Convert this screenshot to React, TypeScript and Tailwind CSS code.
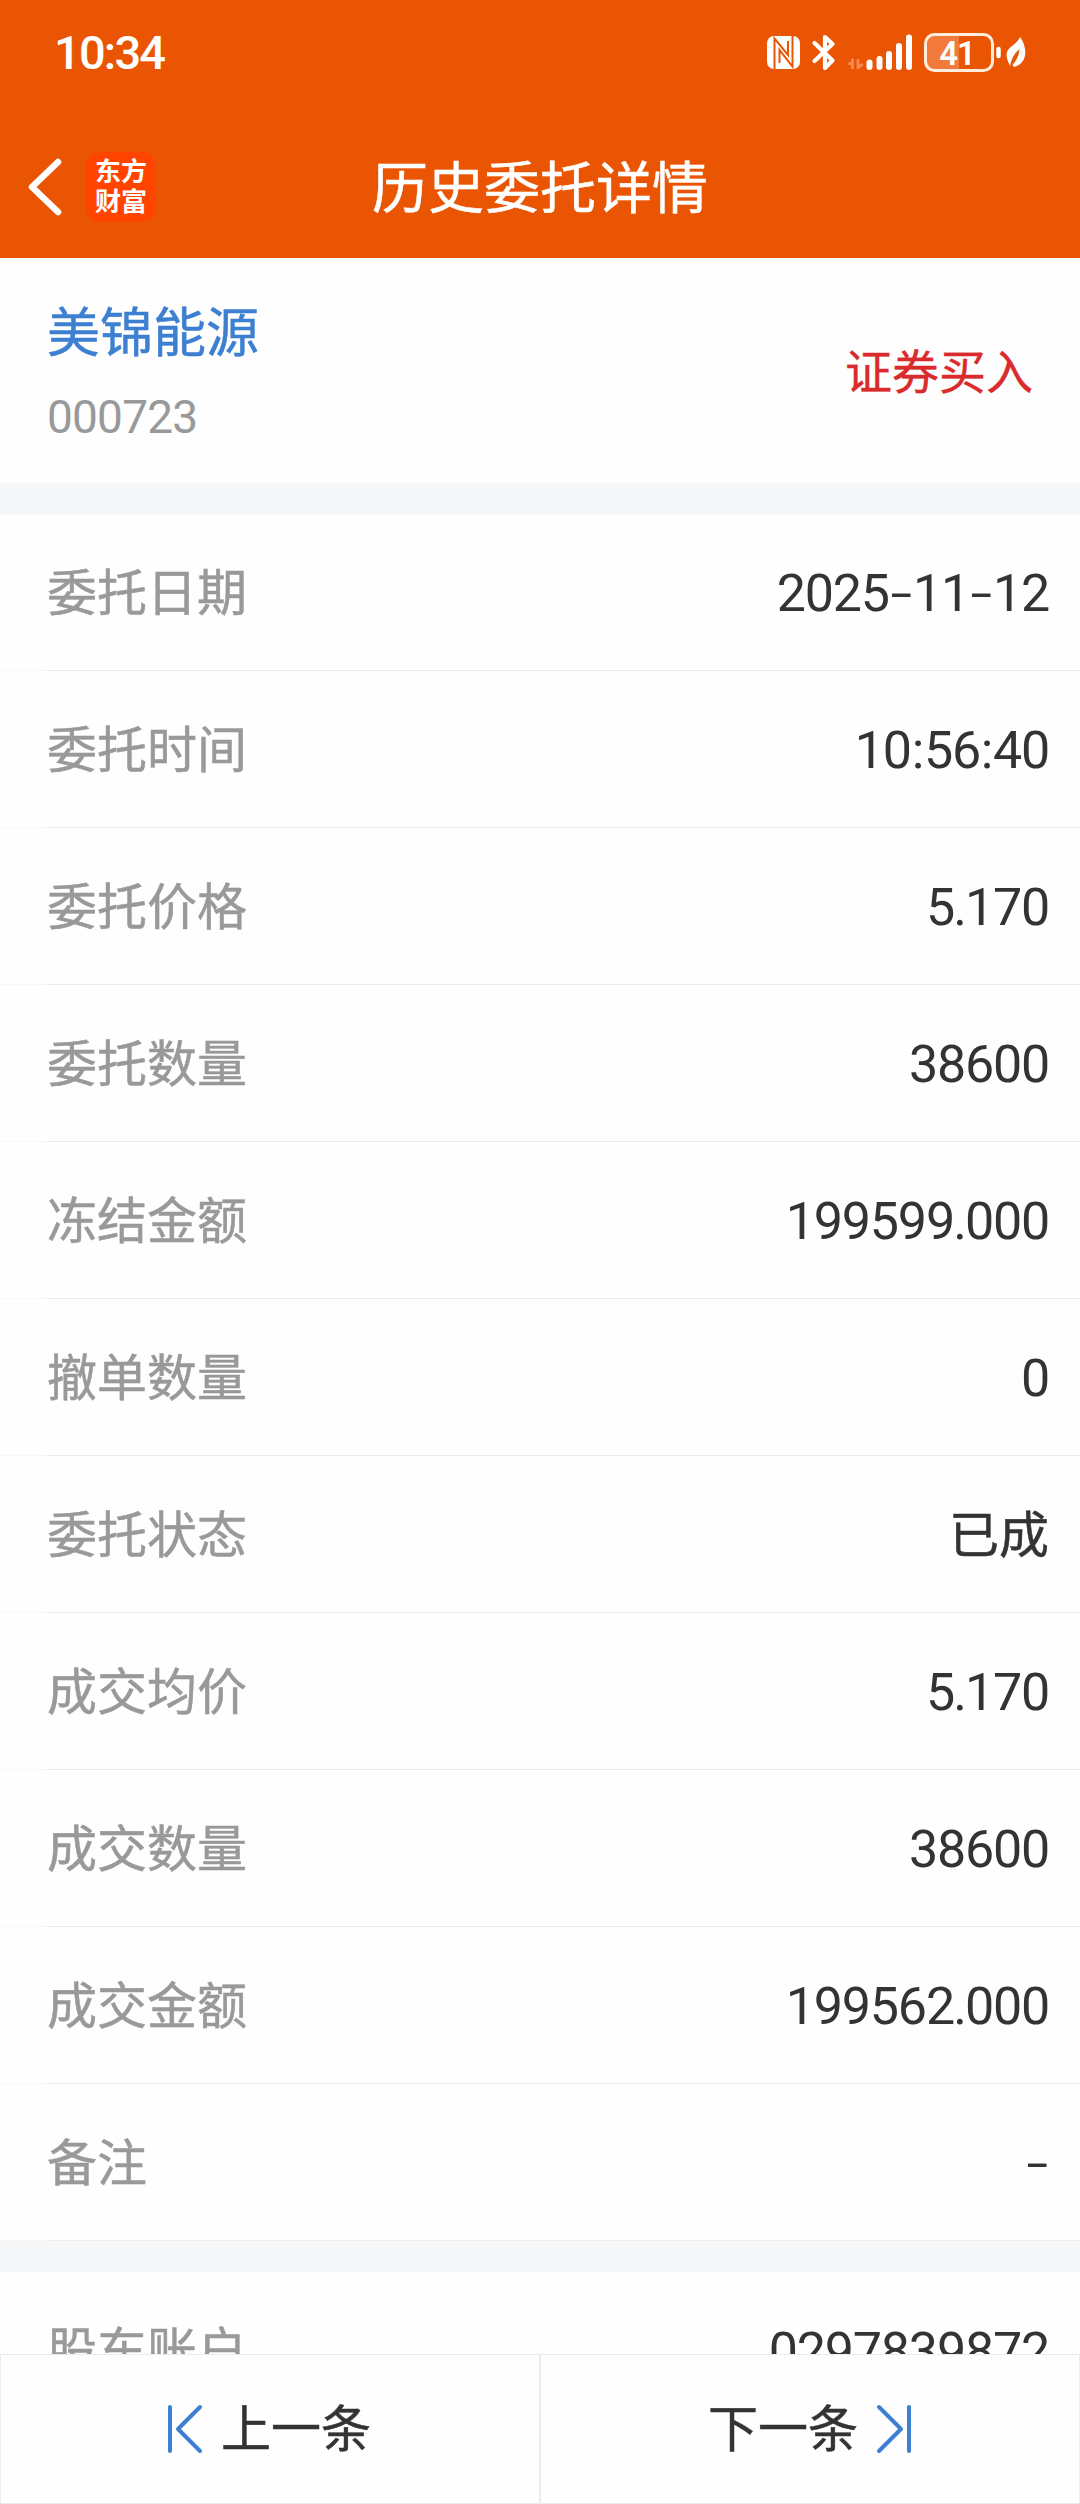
import type { ReactNode } from 'react'

interface DetailItem {
  label: string;
  value: string;
}

const details: DetailItem[] = [
  { label: '委托日期', value: '2025-11-12' },
  { label: '委托时间', value: '10:56:40' },
  { label: '委托价格', value: '5.170' },
  { label: '委托数量', value: '38600' },
  { label: '冻结金额', value: '199599.000' },
  { label: '撤单数量', value: '0' },
  { label: '委托状态', value: '已成' },
  { label: '成交均价', value: '5.170' },
  { label: '成交数量', value: '38600' },
  { label: '成交金额', value: '199562.000' },
  { label: '备注', value: '-' },
]

function StatusIcons() {
  return (
    <svg className="h-[50px] w-[280px]" viewBox="760 26 280 50" fill="none">
      {/* nfc */}
      <rect x="767" y="35" width="33" height="33" rx="7" fill="#fff" />
      <path d="M774.500 68V37.500L788 54V40M779.500 62V49L792.500 65.500V35" stroke="#ea5504" strokeWidth="2" />
      {/* bluetooth */}
      <path d="M814.500 42L832.500 59.500L825 67V36L832.500 43L814.500 60" stroke="#fff" strokeWidth="4.200" strokeLinejoin="round" strokeLinecap="round" />
      {/* data arrows */}
      <path d="M848.500 62.500H852.500V59V68M858 58V68M858 67L862.500 63" stroke="#f78a55" strokeWidth="2.800" strokeLinejoin="round" />
      {/* signal */}
      <path d="M869.500 61.500V66M879.500 58V66M889 53V66M899 45V66M909 36.500V66" stroke="#fff" strokeWidth="6" strokeLinecap="round" />
      {/* battery */}
      <path d="M934 33.500H959V69.500H934Q926 69.500 926 61V42Q926 33.500 934 33.500Z" fill="#f27a3b" />
      <rect x="925.500" y="33.500" width="67" height="36" rx="9" stroke="#ffeedd" strokeWidth="3" />
      <path d="M998.500 48V55" stroke="#fff" strokeWidth="4.500" strokeLinecap="round" />
      <text x="957" y="63.500" textAnchor="middle" fill="#fff" fontFamily="Roboto, sans-serif" fontSize="33" fontWeight="600" letterSpacing="-1">41</text>
      {/* leaf */}
      <path d="M1020 36C1027 45 1029 62 1014 66L1012.500 64Q1019 57 1019.500 48Q1012 54 1010 65C1004 53 1007 49 1012 45Q1018 41 1020 36Z" fill="#fff" />
    </svg>
  )
}

function PrevIcon() {
  return (
    <svg className="h-[50px] w-[36px]" viewBox="0 0 36 50" fill="none" stroke="#3d7fd0" strokeWidth="4" strokeLinecap="round" strokeLinejoin="round">
      <path d="M3 3V47M33 3L11 25L33 47" />
    </svg>
  )
}

function NextIcon() {
  return (
    <svg className="h-[50px] w-[36px]" viewBox="0 0 36 50" fill="none" stroke="#3d7fd0" strokeWidth="4" strokeLinecap="round" strokeLinejoin="round">
      <path d="M33 3V47M3 3L25 25L3 47" />
    </svg>
  )
}

function Value({ text }: { text: string }) {
  return (
    <span className="flex text-[52px] tracking-[-1.2px] text-[#333333]">
      {text.split(/([-.:])/).filter(Boolean).map((part, i) => {
        if (part === '-') {
          return <span key={i} className="flex w-6 justify-center"><span className="inline-block scale-x-[1.5] scale-y-[0.9] tracking-normal">-</span></span>
        }
        if (part === ':') return <span key={i} className="flex w-[13px] justify-center">:</span>
        if (part === '.') return <span key={i} className="flex w-[11px] justify-center">.</span>
        if (/[0-9]/.test(part)) return <span key={i}>{part}</span>
        return <span key={i} className="text-[50px] tracking-normal [-webkit-text-stroke:0.5px]">{part}</span>
      })}
    </span>
  )
}

function Row({ label, children }: { label: string; children: ReactNode }) {
  return (
    <div className="flex h-[157px] shrink-0 flex-col">
      <div className="flex flex-1 items-center justify-between pt-[3px] pr-[31px] pl-[47px]">
        <span className="text-[50px] text-[#999999] [-webkit-text-stroke:0.5px]">{label}</span>
        {children}
      </div>
      <div className="flex h-px">
        <div className="w-[47px] bg-[#f7f7f7]" />
        <div className="flex-1 bg-[#ebebeb]" />
      </div>
    </div>
  )
}

export default function App() {
  return (
    <div className="flex h-[2504px] w-[1080px] flex-col overflow-hidden bg-[#fefefe] font-[Roboto,'Noto_Sans_CJK_SC',sans-serif] leading-none">
      <header className="h-[258px] shrink-0 bg-[#ea5504] text-white">
        <div className="flex h-[104px] items-center justify-between pr-10 pl-[54px]">
          <span className="text-[47px] font-medium tracking-[-1.8px]">10:34</span>
          <StatusIcons />
        </div>
        <div className="grid h-[166px] grid-cols-3 items-center">
          <div className="flex items-center pl-7">
            <svg className="h-[58px] w-[34px]" viewBox="0 0 34 58" fill="none" stroke="#fff" strokeWidth="6.500" strokeLinecap="round" strokeLinejoin="round">
              <path d="M30 4L4 29L30 54" />
            </svg>
            <div className="ml-6 flex h-[70px] w-[70px] flex-col items-center justify-center rounded-[14px] bg-[#ff4400] text-[26px] leading-[30px] font-bold">
              <span>东方</span>
              <span>财富</span>
            </div>
          </div>
          <h1 className="pt-1 text-center text-[56px] whitespace-nowrap [-webkit-text-stroke:0.5px]">历史委托详情</h1>
        </div>
      </header>

      <section className="flex h-[225px] shrink-0 items-center justify-between pr-[47px] pl-[47px]">
        <div className="flex flex-col gap-[33px] pt-[7px]">
          <span className="text-[53px] text-[#3d7fd0] [-webkit-text-stroke:0.5px]">美锦能源</span>
          <span className="text-[46px] tracking-[-0.8px] text-[#999999]">000723</span>
        </div>
        <span className="pt-[3px] text-[47px] text-[#d92b2b] [-webkit-text-stroke:0.4px]">证券买入</span>
      </section>

      <div className="h-[31px] shrink-0 bg-[#f6f7f9]" />
      {details.map((item) => (
        <Row key={item.label} label={item.label}>
          <Value text={item.value} />
        </Row>
      ))}
      <div className="h-[31px] shrink-0 bg-[#f6f7f9]" />

      <div className="h-[82px] shrink-0 overflow-hidden">
        <Row label="股东账户">
          <Value text="0297839872" />
        </Row>
      </div>

      <footer className="grid h-[150px] shrink-0 grid-cols-2 border border-[#ebebeb] text-[50px] text-[#333333]">
        <button className="flex items-center justify-center gap-[18px] border-r border-[#ebebeb] pr-0.5">
          <PrevIcon />
          <span className="pt-0.5 [-webkit-text-stroke:0.5px]">上一条</span>
        </button>
        <button className="flex items-center justify-center gap-[18px] border-l border-[#ebebeb]">
          <span className="pt-0.5 [-webkit-text-stroke:0.5px]">下一条</span>
          <NextIcon />
        </button>
      </footer>
    </div>
  )
}
